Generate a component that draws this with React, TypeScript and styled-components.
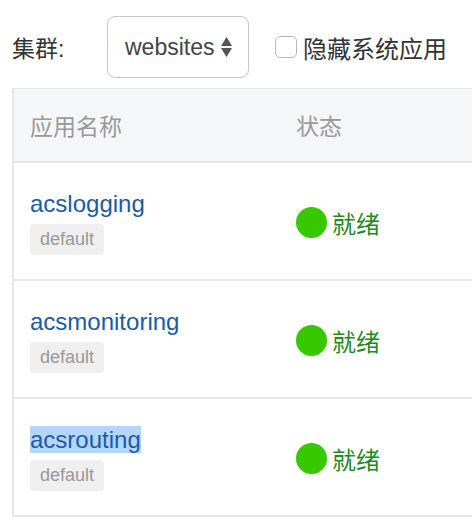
import React from "react";
import styled, { createGlobalStyle } from "styled-components";

const GlobalStyle = createGlobalStyle`
  body {
    margin: 0;
    background: #fff;
    font-family: "Liberation Sans", "Noto Sans CJK SC", sans-serif;
    overflow: hidden;
  }
`;

const Page = styled.div`
  padding: 16px 0 0 12px;
  width: 640px;
`;

const Toolbar = styled.div`
  display: flex;
  align-items: center;
  height: 62px;
`;

const Label = styled.span`
  font-size: 23px;
  color: #333;
  width: 95px;
`;

const Select = styled.div`
  box-sizing: border-box;
  width: 142px;
  height: 62px;
  border: 1px solid #c8c8c8;
  border-radius: 8px;
  display: flex;
  align-items: center;
  padding: 0 0 0 17px;
  font-size: 23px;
  color: #444;
  gap: 6px;
`;

const Arrows = styled.svg`
  width: 13px;
  height: 24px;
`;

const CheckWrap = styled.label`
  display: flex;
  align-items: center;
  margin-left: 26px;
  font-size: 24px;
  color: #333;
`;

const Box = styled.span`
  box-sizing: border-box;
  width: 22px;
  height: 22px;
  border: 1px solid #b8b8b8;
  border-radius: 5px;
  margin-right: 6px;
`;

const Table = styled.table`
  margin-top: 10px;
  width: 640px;
  border-collapse: collapse;
  border-left: 2px solid #e6e6e6;
  border-top: 1px solid #e6e6e6;
`;

const Th = styled.th<{ $w?: number }>`
  background: #f5f6f8;
  height: 73px;
  text-align: left;
  font-weight: normal;
  font-size: 23px;
  color: #999;
  padding: 0 16px;
  border-bottom: 2px solid #e6e6e6;
  width: ${p => (p.$w ? `${p.$w}px` : "auto")};
  box-sizing: border-box;
`;

const Td = styled.td`
  height: 118px;
  box-sizing: border-box;
  padding: 4px 16px 0;
  border-bottom: 2px solid #e8e8e8;
  vertical-align: middle;
`;

const Name = styled.a<{ $selected?: boolean }>`
  display: inline-block;
  font-size: 24px;
  line-height: 27px;
  color: #1a5ba6;
  text-decoration: none;
  background: ${p => (p.$selected ? "#b4d5fe" : "transparent")};
`;

const Badge = styled.div`
  margin-top: 7px;
  width: fit-content;
  padding: 0 10px;
  height: 31px;
  line-height: 31px;
  border-radius: 4px;
  background: #efefef;
  color: #999;
  font-size: 18px;
`;

const Status = styled.div`
  display: flex;
  align-items: center;
  gap: 5px;
  font-size: 24px;
  color: #1f8a1f;
`;

const Dot = styled.span`
  width: 31px;
  height: 31px;
  border-radius: 50%;
  background: #38c800;
`;

const apps = [
  { name: "acslogging", ns: "default" },
  { name: "acsmonitoring", ns: "default" },
  { name: "acsrouting", ns: "default", selected: true },
];

export default function App() {
  return (
    <Page>
      <GlobalStyle />
      <Toolbar>
        <Label>集群:</Label>
        <Select>
          websites
          <Arrows viewBox="0 0 13 24">
            <path d="M6.5 2 L12 11 H1 Z" fill="#555" />
            <path d="M6.5 22 L12 13 H1 Z" fill="#555" />
          </Arrows>
        </Select>
        <CheckWrap>
          <Box />
          隐藏系统应用
        </CheckWrap>
      </Toolbar>
      <Table>
        <thead>
          <tr>
            <Th $w={267}>应用名称</Th>
            <Th>状态</Th>
          </tr>
        </thead>
        <tbody>
          {apps.map(a => (
            <tr key={a.name}>
              <Td>
                <Name $selected={a.selected}>{a.name}</Name>
                <Badge>{a.ns}</Badge>
              </Td>
              <Td>
                <Status>
                  <Dot />
                  就绪
                </Status>
              </Td>
            </tr>
          ))}
        </tbody>
      </Table>
    </Page>
  );
}
